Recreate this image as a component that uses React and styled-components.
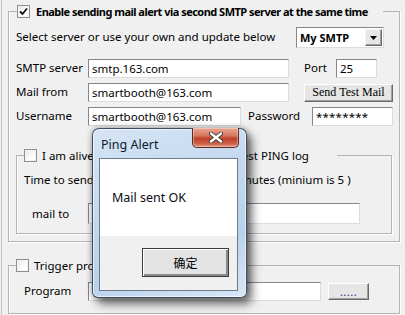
import React from 'react';
import styled, { createGlobalStyle } from 'styled-components';

const Global = createGlobalStyle`
  html, body { margin: 0; padding: 0; background: #f0f0f0; }
  body {
    font-family: "Noto Sans", "Noto Sans CJK SC", sans-serif;
    font-size: 11.5px;
    color: #000;
  }
  * { box-sizing: border-box; }
`;

const Page = styled.div`
  position: relative;
  width: 405px;
  height: 315px;
  overflow: hidden;
  padding: 4px 0 0 8px;
  box-shadow: inset 1px 0 0 #f0f0f0, inset 2px 0 0 #c4c4c4;
`;

const Group = styled.fieldset`
  margin: ${p => p.$mt || 0}px 0 0 0;
  padding: ${p => p.$pad};
  width: ${p => p.$w}px;
  min-width: 0;
  border: 1px solid #b4b4b4;
  box-shadow: 1px 1px 0 #fff, inset 1px 0 0 #fff;
`;

const Legend = styled.legend`
  margin-left: ${p => p.$ml || 0}px;
  padding: 0;
  width: ${p => p.$w}px;
  height: 14px;
  display: flex;
  align-items: center;
  gap: ${p => p.$gap}px;
  white-space: nowrap;
  font-weight: ${p => (p.$bold ? 700 : 400)};
  font-size: ${p => (p.$bold ? '11px' : '11.5px')};
  letter-spacing: ${p => (p.$bold ? '-0.52px' : '0')};
`;

const Box = styled.span`
  flex: none;
  width: 13px;
  height: 13px;
  border: 1px solid #8e8f8f;
  background: linear-gradient(135deg, #e6e6e6, #fff 70%);
  box-shadow: inset 0 0 0 1px #f4f4f4;
  display: inline-flex;
  align-items: center;
  justify-content: center;
`;

const Row = styled.div`
  display: flex;
  align-items: center;
  height: ${p => p.$h || 19}px;
  margin-top: ${p => p.$mt || 0}px;
  white-space: nowrap;
`;

const Label = styled.span`
  flex: none;
  width: ${p => (p.$w ? `${p.$w}px` : 'auto')};
  padding-left: ${p => p.$pl || 0}px;
  margin-left: ${p => p.$ml || 0}px;
  margin-top: ${p => (p.$up ? -3 : 0)}px;
`;

const Input = styled.div`
  flex: none;
  width: ${p => p.$w}px;
  height: ${p => p.$h || 19}px;
  margin: 0 ${p => p.$mx || 0}px;
  background: #fff;
  border: 1px solid;
  border-color: #828790 #dcdcdc #dcdcdc #828790;
  padding: 0 3px;
  display: flex;
  align-items: center;
  font-size: 11.5px;
  letter-spacing: ${p => (p.$pw ? '0.2px' : '0')};
`;

const Btn = styled.div`
  flex: none;
  width: ${p => p.$w}px;
  height: ${p => p.$h}px;
  margin-left: ${p => p.$ml || 0}px;
  background: #e6e6e6;
  border: 1px solid;
  border-color: #fff #696969 #696969 #fff;
  box-shadow: inset -1px -1px 0 #a0a0a0;
  display: flex;
  align-items: center;
  justify-content: center;
  font-family: ${p => (p.$serif ? '"Liberation Serif", serif' : 'inherit')};
  font-size: ${p => (p.$serif ? '12px' : '11px')};
  color: ${p => p.$color || '#000'};
  letter-spacing: ${p => p.$ls || 0};
`;

const Select = styled.div`
  flex: none;
  width: 88px;
  height: 21px;
  background: #fff;
  border: 1px solid;
  border-color: #828790 #dcdcdc #dcdcdc #828790;
  display: flex;
  align-items: center;
  justify-content: space-between;
  padding: 1px 1px 1px 3px;
  font-weight: 700;
  font-size: 11px;
`;

const Arrow = styled.div`
  width: 17px;
  height: 17px;
  background: #e6e6e6;
  border: 1px solid;
  border-color: #f4f4f4 #696969 #696969 #f4f4f4;
  box-shadow: inset -1px -1px 0 #a0a0a0;
  display: flex;
  align-items: center;
  justify-content: center;
`;

const Dialog = styled.div`
  position: absolute;
  left: 92px;
  top: 128px;
  width: 155px;
  height: 170px;
  border: 1px solid rgba(40, 50, 70, 0.85);
  border-radius: 7px 7px 6px 6px;
  background: linear-gradient(160deg, #d6e5f5 0%, #c3d8ef 40%, #b9d1ec 70%, #d9e7f6 100%);
  box-shadow: 5px 6px 10px rgba(0, 0, 0, 0.55), 0 0 6px rgba(0, 0, 0, 0.35), inset 0 0 0 1px rgba(255,255,255,0.6);
  display: flex;
  flex-direction: column;
  padding: 0 8px 6px 6px;
`;

const TitleBar = styled.div`
  height: 29px;
  display: flex;
  justify-content: space-between;
  align-items: flex-start;
`;

const Title = styled.span`
  margin: 7px 0 0 2px;
  font-size: 12.5px;
  color: #0c1a2b;
`;

const Close = styled.div`
  width: 47px;
  height: 20px;
  margin: -1px -1px 0 0;
  border: 1px solid #5b2a22;
  border-top: none;
  border-radius: 0 0 5px 5px;
  background: linear-gradient(#e9a792 0%, #d9775f 40%, #c1412a 55%, #cc5d43 80%, #e49580 100%);
  box-shadow: inset 0 0 0 1px rgba(255,255,255,0.35);
  display: flex;
  align-items: center;
  justify-content: center;
`;

const Client = styled.div`
  flex: 1;
  border: 1px solid #6d7a88;
  display: flex;
  flex-direction: column;
  background: #f0f0f0;
`;

const Message = styled.div`
  height: 77px;
  background: #fff;
  display: flex;
  align-items: center;
  padding-left: 12px;
  font-size: 12.5px;
  color: #0a0a14;
`;

const Footer = styled.div`
  flex: 1;
  display: flex;
  justify-content: flex-end;
  padding: 12px 8px 0 0;
`;

const OkBtn = styled.div`
  width: 87px;
  height: 29px;
  border: 1px solid #3c3c3c;
  background: #e3e3e3;
  box-shadow: inset 1px 1px 0 #fff, inset -2px -2px 0 #8a8a8a;
  display: flex;
  align-items: center;
  justify-content: center;
  font-size: 12px;
`;

const Check = ({ on }) => (
  <Box>
    {on && (
      <svg width="9" height="9" viewBox="0 0 9 9">
        <path d="M1 4.5 L3.5 7 L8 1.5" fill="none" stroke="#111" strokeWidth="1.8" />
      </svg>
    )}
  </Box>
);

export default function App() {
  return (
    <>
      <Global />
      <Page>
        <Group $w={392} $pad="9px 0 7px 7px">
          <Legend $ml={1} $w={366} $gap={6} $bold>
            <Check on />
            Enable sending mail alert via second SMTP server at the same time
          </Legend>
          <Row $h={21}>
            <Label $w={280} $up>Select server or use your own and update below</Label>
            <Select>
              My SMTP
              <Arrow>
                <svg width="7" height="4" viewBox="0 0 7 4"><path d="M0 0H7L3.5 4Z" fill="#000" /></svg>
              </Arrow>
            </Select>
          </Row>
          <Row $mt={11}>
            <Label $w={72} $up>SMTP server</Label>
            <Input $w={201}>smtp.163.com</Input>
            <Label $w={32} $ml={15} $up>Port</Label>
            <Input $w={41}>25</Input>
          </Row>
          <Row $mt={5}>
            <Label $w={72} $up>Mail from</Label>
            <Input $w={201}>smartbooth@163.com</Input>
            <Btn $w={89} $h={18} $ml={15} $serif>Send Test Mail</Btn>
          </Row>
          <Row $mt={5}>
            <Label $w={72} $up>Username</Label>
            <Input $w={153}>smartbooth@163.com</Input>
            <Label $w={64} $ml={7} $up>Password</Label>
            <Input $w={81} $pw>********</Input>
          </Row>
          <Group $w={376} $mt={22} $pad="8px 0 9px 7px">
            <Legend $w={313} $gap={5}>
              <Check />
              I am alive mail, send mail with the latest PING log
            </Legend>
            <Row>
              <Label>Time to send I am alive mail every</Label>
              <Input $w={18} $h={18} $mx={3}>5</Input>
              <Label>minutes (minium is 5 )</Label>
            </Row>
            <Row $mt={14} $h={21}>
              <Label $w={64} $pl={8}>mail to</Label>
              <Input $w={272} $h={21}></Input>
            </Row>
          </Group>
        </Group>
        <Group $w={392} $mt={16} $pad="10px 0 12px 7px">
          <Legend $w={200} $gap={5}>
            <Check />
            Trigger program when alert
          </Legend>
          <Row>
            <Label $w={72} $pl={8} $up>Program</Label>
            <Input $w={233}></Input>
            <Btn $w={41} $h={17} $ml={7} $color="#203080" $ls="0.5px">.....</Btn>
          </Row>
        </Group>

        <Dialog>
          <TitleBar>
            <Title>Ping Alert</Title>
            <Close>
              <svg width="14" height="11" viewBox="0 0 14 11">
                <path d="M2 1.5 L12 9.5 M12 1.5 L2 9.5" stroke="#3a3a3a" strokeWidth="4.2" strokeLinecap="round" />
                <path d="M2 1.5 L12 9.5 M12 1.5 L2 9.5" stroke="#fff" strokeWidth="2.4" strokeLinecap="round" />
              </svg>
            </Close>
          </TitleBar>
          <Client>
            <Message>Mail sent OK</Message>
            <Footer>
              <OkBtn>确定</OkBtn>
            </Footer>
          </Client>
        </Dialog>
      </Page>
    </>
  );
}
